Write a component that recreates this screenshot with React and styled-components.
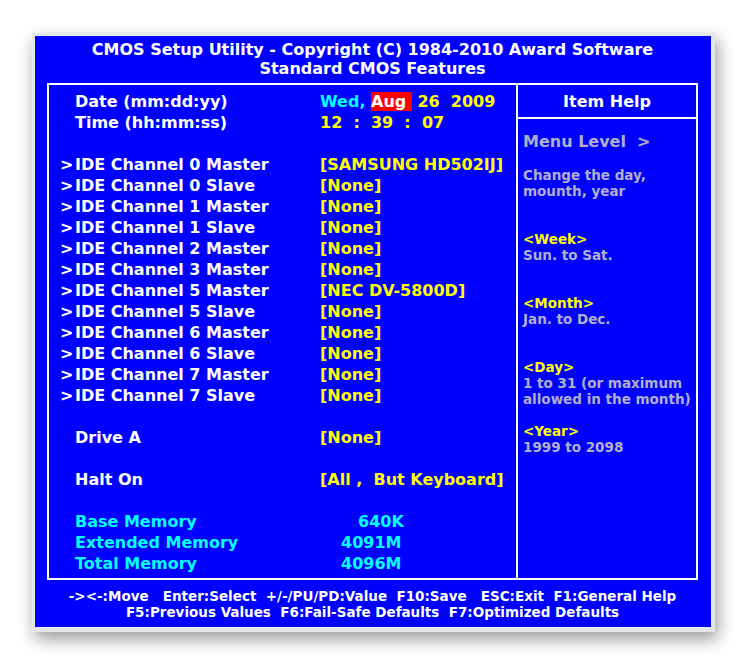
import React from "react";
import styled, { createGlobalStyle } from "styled-components";

const Global = createGlobalStyle`
  html, body { margin: 0; padding: 0; background: #ffffff; }
  #root { width: 747px; height: 664px; }
`;

const FONT = `"DejaVu Sans", Verdana, sans-serif`;

const Page = styled.div`
  width: 747px;
  height: 664px;
  box-sizing: border-box;
  padding: 33px 0 0 32px;
  background: #ffffff;
`;

const Frame = styled.div`
  width: 683px;
  height: 599px;
  box-sizing: border-box;
  padding: 3px 4px 5px 3px;
  background: #e6e6e6;
  box-shadow: 3px 7px 16px rgba(0, 0, 0, 0.4);
`;

const Screen = styled.div`
  width: 676px;
  height: 591px;
  box-sizing: border-box;
  background: #0000fe;
  display: flex;
  flex-direction: column;
  font-family: ${FONT};
  font-weight: bold;
  color: #ffffff;
  padding: 4px 13px 0 12px;
`;

const Title = styled.div`
  text-align: center;
  font-size: 16px;
  line-height: 19px;
  white-space: pre;
  margin-bottom: 5px;
`;

const Box = styled.div`
  height: 497px;
  box-sizing: border-box;
  border: 2px solid #ffffff;
  display: grid;
  grid-template-columns: 467px 2px 1fr;
`;

const Divider = styled.div`
  background: #ffffff;
`;

const Left = styled.div`
  padding: 6px 0 0 11px;
  display: flex;
  flex-direction: column;
`;

const Row = styled.div`
  display: grid;
  grid-template-columns: 15px 245px 1fr;
  height: 21px;
  line-height: 21px;
  font-size: 16px;
  white-space: pre;
`;

const Arrow = styled.span`
  color: #ffffff;
`;

const Label = styled.span`
  color: ${(p) => (p.$cyan ? "#00ffff" : "#ffffff")};
`;

const Value = styled.span`
  color: ${(p) => p.$color || "#ffff00"};
  padding-left: ${(p) => p.$indent || 0}px;
`;

const Cyan = styled.span`
  color: #00ffff;
`;

const Hl = styled.span`
  background: #ff0000;
  color: #ffffff;
`;

const Right = styled.div`
  display: flex;
  flex-direction: column;
`;

const HelpHead = styled.div`
  height: 32px;
  line-height: 33px;
  text-align: center;
  font-size: 16px;
  border-bottom: 2px solid #ffffff;
`;

const HelpBody = styled.div`
  padding: 12px 0 0 5px;
  color: #b0b0cc;
`;

const MenuLevel = styled.div`
  font-size: 16px;
  line-height: 21px;
  white-space: pre;
  margin-bottom: 15px;
`;

const HelpLine = styled.div`
  font-size: 13.5px;
  line-height: 16px;
  height: 16px;
  white-space: pre;
  color: ${(p) => (p.$key ? "#ffff00" : "#b0b0cc")};
`;

const Footer = styled.div`
  padding-top: 8px;
  text-align: center;
  font-size: 13.5px;
  line-height: 16px;
  white-space: pre;
`;

const ide = [
  ["IDE Channel 0 Master", "[SAMSUNG HD502IJ]"],
  ["IDE Channel 0 Slave", "[None]"],
  ["IDE Channel 1 Master", "[None]"],
  ["IDE Channel 1 Slave", "[None]"],
  ["IDE Channel 2 Master", "[None]"],
  ["IDE Channel 3 Master", "[None]"],
  ["IDE Channel 5 Master", "[NEC DV-5800D]"],
  ["IDE Channel 5 Slave", "[None]"],
  ["IDE Channel 6 Master", "[None]"],
  ["IDE Channel 6 Slave", "[None]"],
  ["IDE Channel 7 Master", "[None]"],
  ["IDE Channel 7 Slave", "[None]"],
];

const help = [
  ["Change the day,"],
  ["mounth, year"],
  [""],
  [""],
  ["<Week>", true],
  ["Sun. to Sat."],
  [""],
  [""],
  ["<Month>", true],
  ["Jan. to Dec."],
  [""],
  [""],
  ["<Day>", true],
  ["1 to 31 (or maximum"],
  ["allowed in the month)"],
  [""],
  ["<Year>", true],
  ["1999 to 2098"],
];

const Blank = () => <Row />;

export default function App() {
  return (
    <>
      <Global />
      <Page>
        <Frame>
          <Screen>
            <Title>
              {"CMOS Setup Utility - Copyright (C) 1984-2010 Award Software"}
              <br />
              {"Standard CMOS Features"}
            </Title>
            <Box>
              <Left>
                <Row>
                  <Arrow />
                  <Label>Date (mm:dd:yy)</Label>
                  <Value>
                    <Cyan>{"Wed, "}</Cyan>
                    <Hl>{"Aug "}</Hl>
                    {" 26  2009"}
                  </Value>
                </Row>
                <Row>
                  <Arrow />
                  <Label>Time (hh:mm:ss)</Label>
                  <Value>{"12  :  39  :  07"}</Value>
                </Row>
                <Blank />
                {ide.map(([l, v]) => (
                  <Row key={l}>
                    <Arrow>&gt;</Arrow>
                    <Label>{l}</Label>
                    <Value>{v}</Value>
                  </Row>
                ))}
                <Blank />
                <Row>
                  <Arrow />
                  <Label>Drive A</Label>
                  <Value>[None]</Value>
                </Row>
                <Blank />
                <Row>
                  <Arrow />
                  <Label>Halt On</Label>
                  <Value>{"[All ,  But Keyboard]"}</Value>
                </Row>
                <Blank />
                <Row>
                  <Arrow />
                  <Label $cyan>Base Memory</Label>
                  <Value $color="#00ffff" $indent={38}>640K</Value>
                </Row>
                <Row>
                  <Arrow />
                  <Label $cyan>Extended Memory</Label>
                  <Value $color="#00ffff" $indent={21}>4091M</Value>
                </Row>
                <Row>
                  <Arrow />
                  <Label $cyan>Total Memory</Label>
                  <Value $color="#00ffff" $indent={21}>4096M</Value>
                </Row>
              </Left>
              <Divider />
              <Right>
                <HelpHead>Item Help</HelpHead>
                <HelpBody>
                  <MenuLevel>{"Menu Level  >"}</MenuLevel>
                  {help.map(([t, k], i) => (
                    <HelpLine key={i} $key={k}>
                      {t}
                    </HelpLine>
                  ))}
                </HelpBody>
              </Right>
            </Box>
            <Footer>
              {"-><-:Move   Enter:Select  +/-/PU/PD:Value  F10:Save   ESC:Exit  F1:General Help"}
              <br />
              {"F5:Previous Values  F6:Fail-Safe Defaults  F7:Optimized Defaults"}
            </Footer>
          </Screen>
        </Frame>
      </Page>
    </>
  );
}
